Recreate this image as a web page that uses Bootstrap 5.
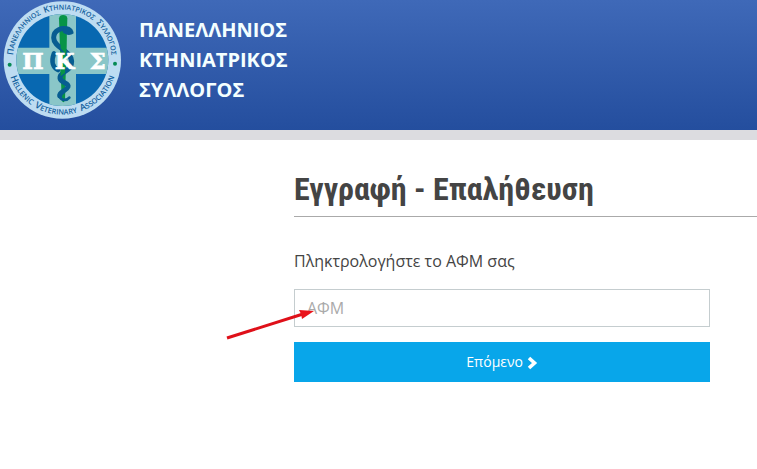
<!DOCTYPE html>
<html lang="el">
<head>
<meta charset="utf-8">
<meta name="viewport" content="width=device-width, initial-scale=1">
<title>Εγγραφή - Επαλήθευση</title>
<link href="https://cdn.jsdelivr.net/npm/bootstrap@5.3.0/dist/css/bootstrap.min.css" rel="stylesheet">
<style>
body { font-family: "Open Sans", "Noto Sans", sans-serif; color: #444; background: #fff; }
.site-header { background: linear-gradient(#3f69b8, #244e9e); background-clip: padding-box; border-bottom: 10px solid #dcdce0; }
.site-name { font: 700 20px/30px "Open Sans", "Noto Sans", sans-serif; color: #f4ffff; padding: 15px 0 25px 14px; }
.page-main { padding: 28px 0 0 294px; }
.page-title { font: 700 32px/42px "Roboto Condensed", "Liberation Sans Narrow", Roboto, sans-serif; color: #444; border-bottom: 1px solid #aaa; padding-bottom: 6px; margin-bottom: 32px; }
.afm-form { max-width: 416px; }
.afm-form label { line-height: 24px; margin-bottom: 16px; }
.afm-form .form-control { height: 38px; border-color: #c5cdcf; font-size: 16px; }
.afm-form .form-control::placeholder { color: #aaa; }
.afm-form .btn { height: 40px; margin-top: 15px; padding: 4px 12px 6px; background: #08a6ea; color: #fff; font-size: 14px; }
.pointer-arrow { left: -69px; bottom: -14px; }
</style>
<script src="https://cdn.jsdelivr.net/npm/bootstrap@5.3.0/dist/js/bootstrap.bundle.min.js"></script>
</head>
<body>
<header class="site-header d-flex align-items-start">
  <svg class="flex-shrink-0" width="125" height="125" viewBox="0 0 375 375" role="img" aria-label="ΠΚΣ">
    <defs>
      <path id="arc-top" d="M40 194A148 148 0 1 1 334 194"/>
      <path id="arc-bottom" d="M23 180A164 164 0 0 0 351 180"/>
      <clipPath id="disc"><circle cx="187" cy="180" r="138"/></clipPath>
    </defs>
    <circle cx="187" cy="180" r="176" fill="#bddcf2"/>
    <g clip-path="url(#disc)">
      <path d="M40 30h300v300H40z" fill="#0868b1"/>
      <path d="M148 30h80v300h-80zM40 143h300v79H40z" fill="#8ac6c8"/>
    </g>
    <path d="M177 55q2-10 12-10 12 0 13 10l-7 245q-5 14-10 0z" fill="#079447"/>
    <g fill="none" stroke="#075d91" stroke-linecap="round">
      <path d="M205 90C187 79 161 91 161 113c0 31 51 37 54 71 2 30-37 29-35 50 1 15 28 14 24 26-5 14-27 14-25 28" stroke-width="15"/>
      <path d="M179 288c3 15 22 14 29 5" stroke-width="8"/>
      <path d="M162 160c-10 26-2 43 12 50" stroke-width="14"/>
    </g>
    <path d="M190 80c17-5 29 5 31 20-13 10-26 3-33-3z" fill="#075d91"/>
    <path d="M180 102l19 8v55l-17-20zM181 198l15-9-1 30-13 10z" fill="#079447"/>
    <g font-family="DejaVu Serif" font-weight="700" font-size="68" fill="#fff" stroke="#fff" stroke-width="2" text-anchor="middle">
      <text x="99" y="207">Π</text><text x="194" y="207">Κ</text><text x="293" y="207">Σ</text>
    </g>
    <circle cx="29" cy="194" r="6" fill="#078b55"/><circle cx="345" cy="191" r="6" fill="#078b55"/>
    <g font-family="Open Sans, Noto Sans" font-weight="600" fill="#12609d" text-anchor="middle">
      <text font-size="21"><textPath href="#arc-top" startOffset="50%"><tspan font-size="26">Π</tspan>ΑΝΕΛΛΗΝΙΟΣ&nbsp; <tspan font-size="26">Κ</tspan>ΤΗΝΙΑΤΡΙΚΟΣ&nbsp; <tspan font-size="26">Σ</tspan>ΥΛΛΟΓΟΣ</textPath></text>
      <text font-size="22"><textPath href="#arc-bottom" startOffset="50%"><tspan font-size="28">H</tspan>ELLENIC&nbsp; <tspan font-size="28">V</tspan>ETERINARY&nbsp; <tspan font-size="28">A</tspan>SSOCIATION</textPath></text>
    </g>
  </svg>
  <div class="site-name">ΠΑΝΕΛΛΗΝΙΟΣ<br>ΚΤΗΝΙΑΤΡΙΚΟΣ<br>ΣΥΛΛΟΓΟΣ</div>
</header>
<main class="page-main">
  <h1 class="page-title">Εγγραφή - Επαλήθευση</h1>
  <form class="afm-form">
    <label class="d-block" for="afm">Πληκτρολογήστε το ΑΦΜ σας</label>
    <div class="position-relative">
      <input class="form-control rounded-0" id="afm" type="text" placeholder="ΑΦΜ">
      <svg class="pointer-arrow position-absolute pe-none" width="90" height="32" viewBox="0 0 90 32" aria-hidden="true">
        <path d="M2 29L78 5" stroke="#df1019" stroke-width="3"/><path d="M89 2L74 1 76 5 77 10z" fill="#e9141c"/>
      </svg>
    </div>
    <button class="btn w-100 rounded-0 border-0" type="submit">Επόμενο <svg width="11" height="14" viewBox="0 0 11 14" aria-hidden="true"><path d="M2 2L7.500 7 2 12" fill="none" stroke="#fff" stroke-width="3.600"/></svg></button>
  </form>
</main>
</body>
</html>
